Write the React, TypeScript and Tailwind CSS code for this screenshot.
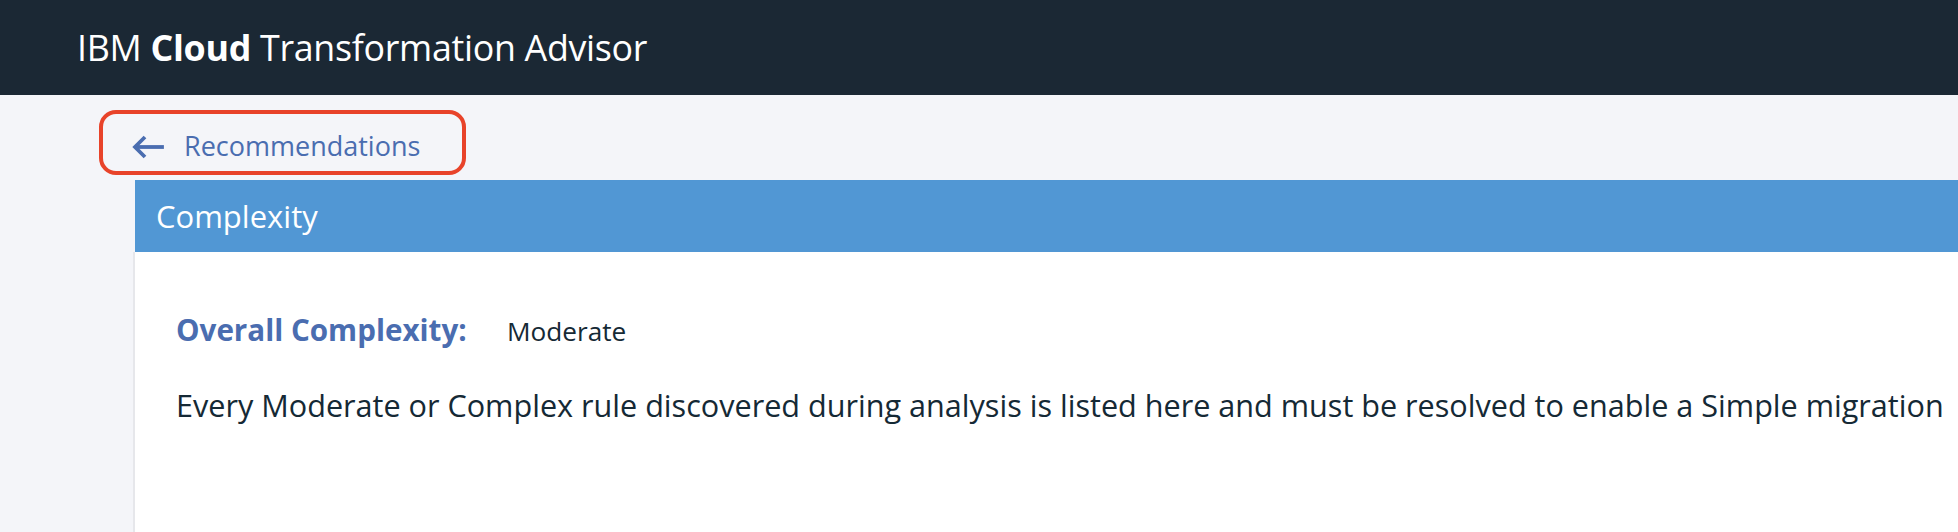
import React from "react";

const font = { fontFamily: '"Open Sans", "Liberation Sans", sans-serif' };

function BackArrow() {
    return (
        <svg viewBox="0 0 32 32" className="w-[32px] h-[32px]" fill="none" stroke="#4a6db0" strokeWidth="3.8" strokeLinecap="square">
            <path d="M30 16H5" />
            <path d="M13 6L3 16l10 10" strokeLinecap="butt" />
        </svg>
    );
}

export default function App() {
    return (
        <div className="w-[1958px] h-[532px] overflow-hidden flex flex-col bg-[#f4f5f9]" style={font}>
            <header className="h-[95px] shrink-0 bg-[#1b2834] flex items-center pl-[77px]">
                <h1 className="text-[35.8px] text-white tracking-[-0.3px]">
                    IBM <span className="font-bold">Cloud</span> Transformation Advisor
                </h1>
            </header>

            <div className="pl-[99px] pt-[15px]">
                <button className="h-[65px] w-[367px] border-[4px] border-[#e8432a] rounded-[17px] flex items-center pl-[29px] pt-[8px] gap-[20px] text-[#4a6db0] text-[27px]">
                    <BackArrow />
                    <span>Recommendations</span>
                </button>
            </div>

            <div className="flex-1 ml-[133px] mt-[5px] flex flex-col">
                <div className="ml-[2px] h-[72px] bg-[#5197d4] flex items-center pl-[21px] text-white text-[31px]">
                    Complexity
                </div>
                <div className="flex-1 bg-white border-l-2 border-[#e6e7eb] pl-[41px] pt-[56px]">
                    <div className="flex items-baseline">
                        <span className="font-bold text-[#4a6db0] text-[29.6px] w-[331px]">Overall Complexity:</span>
                        <span className="text-[#152935] text-[26.2px]">Moderate</span>
                    </div>
                    <p className="mt-[31px] text-[#152935] text-[30.6px] whitespace-nowrap">
                        Every Moderate or Complex rule discovered during analysis is listed here and must be resolved to enable a Simple migration
                    </p>
                </div>
            </div>
        </div>
    );
}
